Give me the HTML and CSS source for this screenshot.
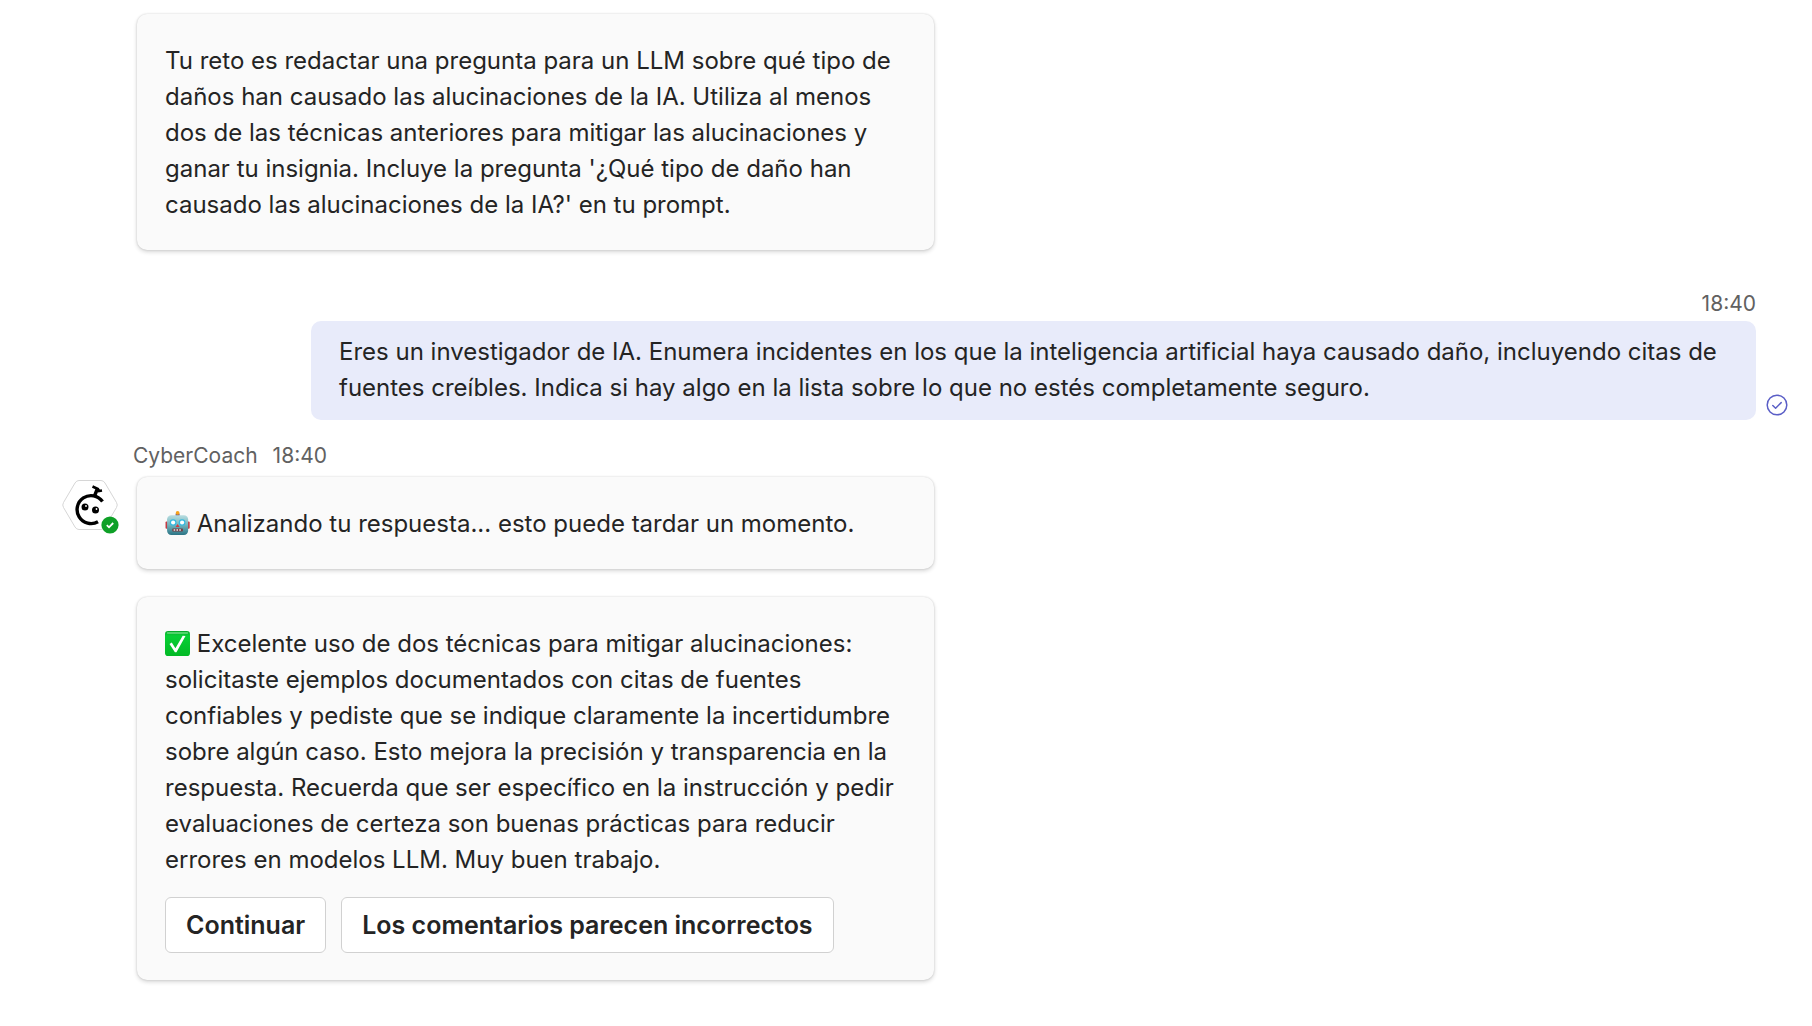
FILE: index.html
```html
<!DOCTYPE html>
<html lang="es">
  <head>
    <meta charset="UTF-8" />
    <meta name="viewport" content="width=device-width, initial-scale=1.0" />
    <title>CyberCoach | Chat</title>
    <link rel="stylesheet" href="styles.css">
  </head>
  <body>
    <main class="chat">
      <!-- Reto -->
      <section class="bot-group">
        <div class="card">
          <p>Tu reto es redactar una pregunta para un LLM sobre qué tipo de daños han causado las alucinaciones de la IA. Utiliza al menos dos de las técnicas anteriores para mitigar las alucinaciones y ganar tu insignia. Incluye la pregunta '¿Qué tipo de daño han causado las alucinaciones de la IA?' en tu prompt.</p>
        </div>
      </section>

      <!-- Mensaje del usuario -->
      <section class="user-group">
        <div class="user-column">
          <time class="meta">18:40</time>
          <p class="user-message">Eres un investigador de IA. Enumera incidentes en los que la inteligencia artificial haya causado daño, incluyendo citas de fuentes creíbles. Indica si hay algo en la lista sobre lo que no estés completamente seguro.</p>
        </div>
        <svg class="sent-icon" viewBox="0 0 22 22" role="img" aria-label="Enviado">
          <circle cx="11" cy="11" r="9.8" fill="none" stroke="#5b5fc7" stroke-width="1.5" />
          <path d="M6.8 11.5 9.6 14.2 15.2 8.6" fill="none" stroke="#5b5fc7" stroke-width="1.5" stroke-linecap="round" stroke-linejoin="round" />
        </svg>
      </section>

      <!-- Respuesta del bot -->
      <section class="bot-group">
        <div class="meta bot-meta"><span>CyberCoach</span><time>18:40</time></div>
        <div class="bot-row">
          <div class="avatar">
            <svg class="avatar-logo" viewBox="0 0 56 50" role="img" aria-label="CyberCoach">
              <path d="M17 .5H39Q41.500 .5 43 3L54.500 22.500Q56 25 54.500 27.500L43 47Q41.500 49.500 39 49.500H17Q14.500 49.500 13 47L1.500 27.500Q0 25 1.500 22.500L13 3Q14.500 .5 17 .5Z" fill="#fff" stroke="#d6d6d6" />
              <path d="M40.500 21.500A14 14 0 1 0 36 41.800" fill="none" stroke="#000" stroke-width="3.400" />
              <path d="M32.500 16 35.500 8.500" stroke="#000" stroke-width="3.400" />
              <path d="M30.500 6.500 36 9 37 11 40 10.500" fill="none" stroke="#000" stroke-width="2.600" />
              <circle cx="23" cy="27" r="3.500" />
              <circle cx="33.500" cy="30" r="3.500" />
              <circle cx="24" cy="26" r=".9" fill="#fff" />
              <circle cx="34.500" cy="29" r=".9" fill="#fff" />
            </svg>
            <svg class="avatar-status" viewBox="0 0 18 18" role="img" aria-label="Disponible">
              <circle cx="9" cy="9" r="8.600" fill="#0ea027" />
              <path d="M5.800 9.200 8 11.300 12.200 7" fill="none" stroke="#fff" stroke-width="1.800" />
            </svg>
          </div>
          <div class="cards">
            <div class="card">
              <p><svg class="emoji" viewBox="0 0 24 24" role="img" aria-label="Robot">
                <defs>
                  <linearGradient id="face" x1="0" y1="0" x2="0" y2="1">
                    <stop offset="0" stop-color="#b9dde0" />
                    <stop offset=".5" stop-color="#71b4bd" />
                    <stop offset="1" stop-color="#2b7485" />
                  </linearGradient>
                </defs>
                <rect x="10.200" y="2.500" width="3.800" height="3" fill="#5a4a8c" />
                <circle cx="12.100" cy="1.800" r="1.800" fill="#f7a21b" />
                <rect x=".5" y="10" width="3" height="7" rx="1" fill="#c43b43" />
                <rect x="20.700" y="10" width="3" height="7" rx="1" fill="#c43b43" />
                <rect x="2" y="4" width="20.200" height="19" rx="4" fill="url(#face)" />
                <circle cx="7.800" cy="11" r="3.200" fill="#35b9e0" />
                <circle cx="16.400" cy="11" r="3.200" fill="#35b9e0" />
                <circle cx="7.800" cy="11" r="2" fill="#fff" />
                <circle cx="16.400" cy="11" r="2" fill="#fff" />
                <path d="M12.100 12.500 14 15.300H10.200Z" fill="#d8353b" />
                <rect x="7" y="16.800" width="10.200" height="2.800" rx=".6" fill="#743f45" />
                <path d="M8.300 18.200H16" stroke="#e5eef0" stroke-width="1.500" stroke-dasharray="1.500 1.200" />
              </svg> Analizando tu respuesta... esto puede tardar un momento.</p>
            </div>
            <div class="card">
              <p><svg class="emoji" viewBox="0 0 24 24" role="img" aria-label="Correcto">
                <defs>
                  <linearGradient id="green" x1="0" y1="0" x2="0" y2="1">
                    <stop offset="0" stop-color="#08a82a" />
                    <stop offset=".2" stop-color="#08cf35" />
                    <stop offset="1" stop-color="#02b925" />
                  </linearGradient>
                </defs>
                <rect width="24" height="24" rx="3" fill="url(#green)" />
                <path d="M2.500 2H21.500" stroke="#6bdc80" stroke-width="1.500" stroke-linecap="round" />
                <path d="M4.300 12.500 6.500 11 10 16.500 17 4.500 19.700 4.800 11 20.500H9.500Z" fill="#fff" />
              </svg> Excelente uso de dos técnicas para mitigar alucinaciones: solicitaste ejemplos documentados con citas de fuentes confiables y pediste que se indique claramente la incertidumbre sobre algún caso. Esto mejora la precisión y transparencia en la respuesta. Recuerda que ser específico en la instrucción y pedir evaluaciones de certeza son buenas prácticas para reducir errores en modelos LLM. Muy buen trabajo.</p>
              <div class="button-container">
                <button type="button" class="card-button">Continuar</button>
                <button type="button" class="card-button">Los comentarios parecen incorrectos</button>
              </div>
            </div>
          </div>
        </div>
      </section>
    </main>
  </body>
</html>
```
FILE: styles.css
```css
body {
  font-family: Inter, sans-serif;
  margin: 0;
  background-color: #fff;
  color: #242424;
  font-size: 24px;
  line-height: 36px;
}

p {
  margin: 0;
}

.chat {
  padding: 14px 24px 40px 62px;
}

/* Tarjetas del bot */
.bot-group {
  padding-left: 75px;
}

.card {
  box-sizing: border-box;
  max-width: 797px;
  padding: 29px 28px 27px;
  background-color: #fafafa;
  border-radius: 10px;
  box-shadow: 0 0 2px rgba(0, 0, 0, 0.16), 0 2px 4px rgba(0, 0, 0, 0.16);
}

.cards {
  display: flex;
  flex-direction: column;
  flex: 1;
  gap: 28px;
}

.bot-row {
  display: flex;
  gap: 19px;
  margin-left: -75px;
}

.meta {
  color: #616161;
  font-size: 21px;
  line-height: 28px;
}

.bot-meta {
  display: flex;
  gap: 15px;
  margin: 22px 0 7px -4px;
}

/* Avatar */
.avatar {
  position: relative;
  flex: none;
  width: 56px;
  height: 50px;
  margin-top: 3px;
}

.avatar-logo {
  display: block;
  width: 56px;
  height: 50px;
}

.avatar-status {
  position: absolute;
  right: -1px;
  bottom: -4px;
  width: 18px;
  height: 18px;
}

/* Mensaje del usuario */
.user-group {
  display: flex;
  align-items: flex-end;
  gap: 10px;
  margin-top: 40px;
  padding-left: 249px;
}

.user-column {
  display: flex;
  flex-direction: column;
  flex: 1;
  gap: 3px;
}

.user-column .meta {
  text-align: right;
}

.user-message {
  padding: 13px 28px 14px;
  background-color: #e8ebfa;
  border-radius: 10px;
}

.sent-icon {
  flex: none;
  width: 22px;
  height: 22px;
  margin-bottom: 4px;
}

.emoji {
  width: 25px;
  height: 25px;
  vertical-align: -4px;
}

/* Botones */
.button-container {
  display: flex;
  flex-wrap: wrap;
  gap: 15px;
  margin-top: 19px;
}

.card-button {
  padding: 9px 20px;
  background-color: #fff;
  border: 1px solid #d1d1d1;
  border-radius: 6px;
  color: #242424;
  font-family: inherit;
  font-size: 25px;
  font-weight: 600;
  line-height: 36px;
  cursor: pointer;
}

.card-button:hover {
  background-color: #f5f5f5;
}
```
